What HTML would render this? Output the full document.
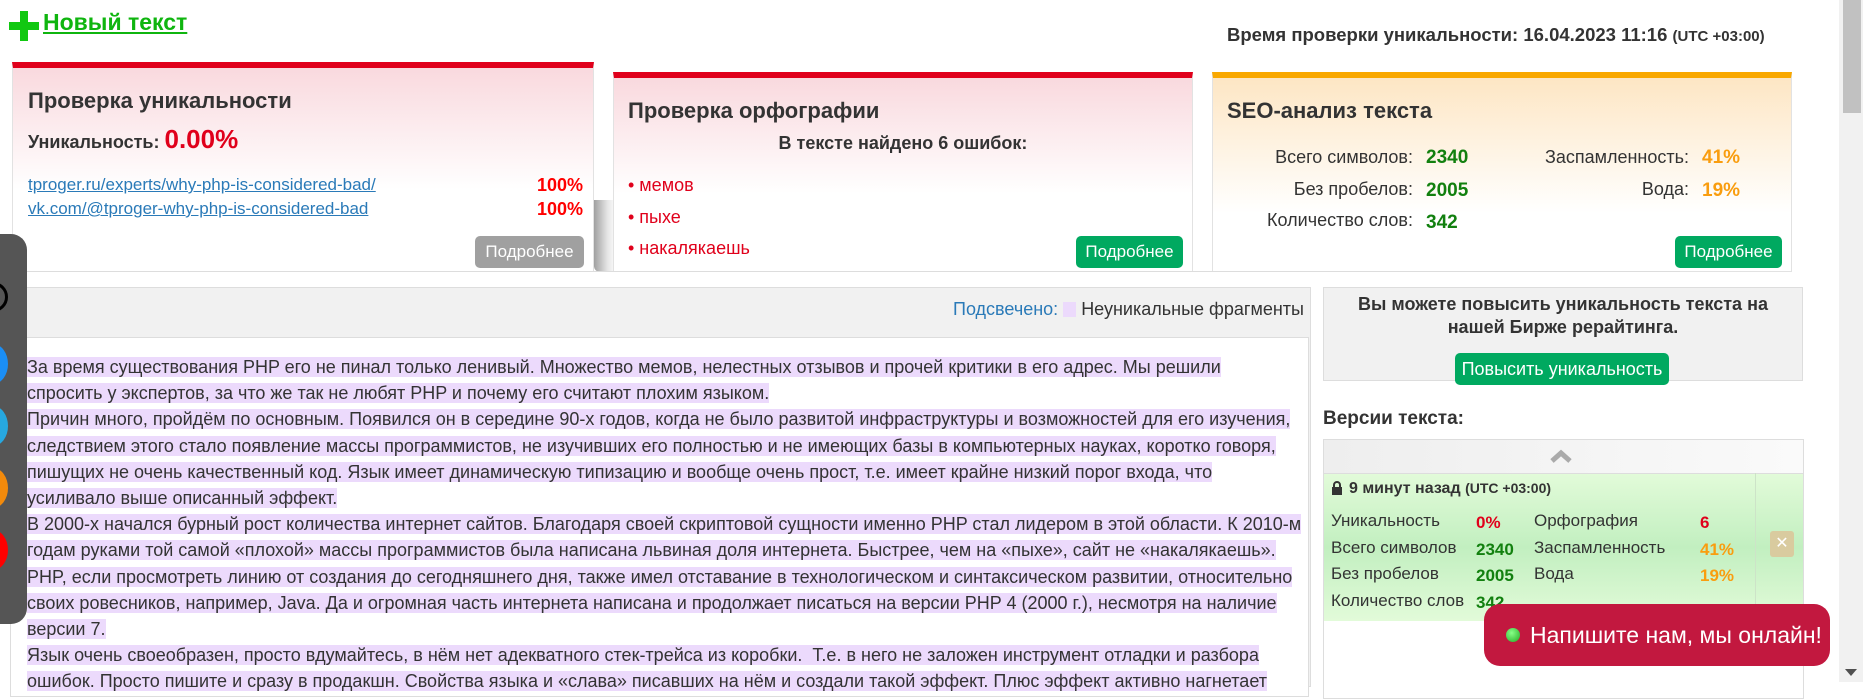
<!DOCTYPE html>
<html><head><meta charset="utf-8"><style>
*{margin:0;padding:0;box-sizing:border-box}
body{width:1863px;height:682px;overflow:hidden;background:#fff;font-family:"Liberation Sans","DejaVu Sans",sans-serif;color:#333;position:relative}
.a{position:absolute}
.card{position:absolute;border:1px solid #e2e2e2;border-top:none}
.btn{position:absolute;border-radius:5px;color:#fff;font-size:17px;text-align:center;line-height:32px}
.g{background:#00a960}
.txt{position:absolute;left:27px;top:354px;font-size:18px;line-height:26.2px;white-space:nowrap;color:#333}
.txt span{background:#ecdafc}
.vg{color:#12800f;font-weight:bold;font-size:19px}
.vo{color:#f99d0f;font-weight:bold;font-size:19px}
</style></head><body>

<svg class="a" style="left:9px;top:11px" width="30" height="30" viewBox="0 0 30 30"><path d="M11 0h8v11h11v8H19v11h-8V19H0v-8h11z" fill="#11c811"/></svg>
<div class="a" style="left:43px;top:9px;font-size:23px;font-weight:bold;color:#0fb50f;text-decoration:underline">Новый текст</div>
<div class="a" style="left:1227px;top:24px;font-size:18.5px;font-weight:bold;color:#333">Время проверки уникальности: 16.04.2023 11:16 <span style="font-size:15px">(UTC +03:00)</span></div>

<div class="card" style="left:12px;top:62px;width:582px;height:210px;background:linear-gradient(#f9d9de,#fff 60%);border-top:6px solid #e0001b">
 <div class="a" style="left:15px;top:20px;font-size:22px;font-weight:bold">Проверка уникальности</div>
 <div class="a" style="left:15px;top:56px;font-size:18px;font-weight:bold">Уникальность: <span style="color:#e0001b;font-size:26px">0.00%</span></div>
 <div class="a" style="left:15px;top:105px;font-size:17px;color:#2a7ab8;text-decoration:underline;line-height:24px">tproger.ru/experts/why-php-is-considered-bad/<br>vk.com/@tproger-why-php-is-considered-bad</div>
 <div class="a" style="right:10px;top:105px;font-size:18px;color:#f00;font-weight:bold;line-height:24px;text-align:right">100%<br>100%</div>
 <div class="btn" style="left:462px;top:168px;width:109px;background:#a0a0a0">Подробнее</div>
</div>

<div class="a" style="left:594px;top:200px;width:22px;height:72px;background:linear-gradient(90deg,#888,#ddd 60%,rgba(255,255,255,0));border-radius:0 0 0 6px;opacity:.8"></div>
<div class="card" style="left:613px;top:72px;width:580px;height:200px;background:linear-gradient(#f9d9de,#fff 60%);border-top:6px solid #e0001b">
 <div class="a" style="left:14px;top:20px;font-size:22px;font-weight:bold">Проверка орфографии</div>
 <div class="a" style="left:0;width:100%;text-align:center;top:55px;font-size:18px;font-weight:bold">В тексте найдено 6 ошибок:</div>
 <div class="a" style="left:14px;top:92px;font-size:18px;color:#e0001b;line-height:31.5px">• мемов<br>• пыхе<br>• накалякаешь</div>
 <div class="btn g" style="left:462px;top:158px;width:107px">Подробнее</div>
</div>

<div class="card" style="left:1212px;top:72px;width:580px;height:200px;background:linear-gradient(#fde6c4,#fff 70%);border-top:6px solid #f9a800">
 <div class="a" style="left:14px;top:20px;font-size:22px;font-weight:bold">SEO-анализ текста</div>
 <div class="a" style="right:378px;top:64px;font-size:18px;text-align:right;line-height:31.5px">Всего символов:<br>Без пробелов:<br>Количество слов:</div>
 <div class="a" style="left:213px;top:64px;line-height:31.5px"><span class="vg">2340</span><br><span class="vg">2005</span><br><span class="vg">342</span></div>
 <div class="a" style="right:102px;top:64px;font-size:18px;text-align:right;line-height:31.5px">Заспамленность:<br>Вода:</div>
 <div class="a" style="left:489px;top:64px;line-height:31.5px"><span class="vo">41%</span><br><span class="vo">19%</span></div>
 <div class="btn g" style="left:462px;top:158px;width:107px">Подробнее</div>
</div>
<div class="a" style="left:0;top:271px;width:1680px;height:1px;background:#ddd"></div>

<div class="a" style="left:10px;top:287px;width:1301px;height:400px;background:#f1f1f1;border:1px solid #ddd"></div>
<div class="a" style="left:953px;top:299px;font-size:18px;color:#2a7ab8">Подсвечено: <span style="display:inline-block;width:13px;height:15px;background:#ecdafc;vertical-align:-2px"></span> <span style="color:#333">Неуникальные фрагменты</span></div>
<div class="a" style="left:10px;top:337px;width:1299px;height:360px;background:#fff;border:1px solid #ddd"></div>
<div class="txt">
<span>За время существования PHP его не пинал только ленивый. Множество мемов, нелестных отзывов и прочей критики в его адрес. Мы решили</span><br>
<span>спросить у экспертов, за что же так не любят PHP и почему его считают плохим языком.</span><br>
<span>Причин много, пройдём по основным. Появился он в середине 90-х годов, когда не было развитой инфраструктуры и возможностей для его изучения,</span><br>
<span>следствием этого стало появление массы программистов, не изучивших его полностью и не имеющих базы в компьютерных науках, коротко говоря,</span><br>
<span>пишущих не очень качественный код. Язык имеет динамическую типизацию и вообще очень прост, т.е. имеет крайне низкий порог входа, что</span><br>
<span>усиливало выше описанный эффект.</span><br>
<span>В 2000-х начался бурный рост количества интернет сайтов. Благодаря своей скриптовой сущности именно PHP стал лидером в этой области. К 2010-м</span><br>
<span>годам руками той самой «плохой» массы программистов была написана львиная доля интернета. Быстрее, чем на «пыхе», сайт не «накалякаешь».</span><br>
<span>PHP, если просмотреть линию от создания до сегодняшнего дня, также имел отставание в технологическом и синтаксическом развитии, относительно</span><br>
<span>своих ровесников, например, Java. Да и огромная часть интернета написана и продолжает писаться на версии PHP 4 (2000 г.), несмотря на наличие</span><br>
<span>версии 7.</span><br>
<span>Язык очень своеобразен, просто вдумайтесь, в нём нет адекватного стек-трейса из коробки.&nbsp; Т.е. в него не заложен инструмент отладки и разбора</span><br>
<span>ошибок. Просто пишите и сразу в продакшн. Свойства языка и «слава» писавших на нём и создали такой эффект. Плюс эффект активно нагнетает</span>
</div>

<div class="a" style="left:1323px;top:287px;width:480px;height:94px;background:#f1f1f1;border:1px solid #ddd"></div>
<div class="a" style="left:1323px;top:293px;width:480px;text-align:center;font-size:18px;font-weight:bold;line-height:23px">Вы можете повысить уникальность текста на<br>нашей Бирже рерайтинга.</div>
<div class="btn g" style="left:1455px;top:353px;width:214px;line-height:32px;font-size:18px">Повысить уникальность</div>
<div class="a" style="left:1323px;top:408px;font-size:19px;font-weight:bold">Версии текста:</div>
<div class="a" style="left:1323px;top:439px;width:481px;height:260px;border:1px solid #ddd;background:#fff"></div>
<div class="a" style="left:1324px;top:440px;width:479px;height:33px;background:linear-gradient(90deg,#eee,#fafafa)"></div>
<svg class="a" style="left:1549px;top:448px" width="24" height="16" viewBox="0 0 24 16"><path d="M3 13L12 5l9 8" stroke="#aaa" stroke-width="5" fill="none"/></svg>
<div class="a" style="left:1324px;top:473px;width:479px;height:148px;background:linear-gradient(#e2fbd9,#c2efc0 50%,#e2fbd9);border-top:1px solid #ddd"></div>
<div class="a" style="left:1755px;top:473px;width:1px;height:148px;background:#cde3c8"></div>
<svg class="a" style="left:1331px;top:481px" width="12" height="14" viewBox="0 0 12 14"><path d="M3 6V4a3 3 0 016 0v2" stroke="#333" stroke-width="2" fill="none"/><rect x="1" y="6" width="10" height="8" fill="#333"/></svg>
<div class="a" style="left:1349px;top:480px;font-size:16px;font-weight:bold">9 минут назад <span style="font-size:14px">(UTC +03:00)</span></div>
<div class="a" style="left:1331px;top:508px;font-size:17px;line-height:26.5px">Уникальность<br>Всего символов<br>Без пробелов<br>Количество слов</div>
<div class="a" style="left:1476px;top:510px;line-height:26.5px;font-size:17px;font-weight:bold"><span style="color:#e0001b">0%</span><br><span style="color:#12800f">2340</span><br><span style="color:#12800f">2005</span><br><span style="color:#12800f">342</span></div>
<div class="a" style="left:1534px;top:508px;font-size:17px;line-height:26.5px">Орфография<br>Заспамленность<br>Вода</div>
<div class="a" style="left:1700px;top:510px;line-height:26.5px;font-size:17px;font-weight:bold"><span style="color:#e0001b">6</span><br><span style="color:#f99d0f">41%</span><br><span style="color:#f99d0f">19%</span></div>
<div class="a" style="left:1770px;top:531px;width:24px;height:26px;background:#d9cb9f;border-radius:3px;color:#fff;font-weight:bold;text-align:center;line-height:26px;font-size:16px">✕</div>

<div class="a" style="left:1484px;top:604px;width:346px;height:62px;background:#c2183f;border-radius:16px;color:#fff;font-size:23px;line-height:62px;padding-left:46px">Напишите нам, мы онлайн!</div>
<div class="a" style="left:1506px;top:628px;width:14px;height:14px;border-radius:50%;background:radial-gradient(circle at 40% 35%,#8f8,#2a2)"></div>

<div class="a" style="left:0;top:234px;width:27px;height:390px;background:#555;border-radius:0 16px 16px 0;overflow:hidden">
 <div class="a" style="left:-22px;top:48px;width:30px;height:30px;border-radius:50%;border:3px solid #000"></div>
 <div class="a" style="left:-22px;top:110px;width:30px;height:40px;border-radius:50%;background:#1b8ef5"></div>
 <div class="a" style="left:-22px;top:172px;width:30px;height:40px;border-radius:50%;background:#27a8e0"></div>
 <div class="a" style="left:-22px;top:234px;width:30px;height:40px;border-radius:50%;background:#f28a0c"></div>
 <div class="a" style="left:-22px;top:296px;width:30px;height:40px;border-radius:50%;background:#f00"></div>
</div>

<div class="a" style="left:1839px;top:0;width:24px;height:682px;background:#f1f1f1"></div>
<div class="a" style="left:1843px;top:0;width:18px;height:113px;background:#c1c1c1"></div>
<svg class="a" style="left:1845px;top:669px" width="12" height="8"><path d="M0 0h12L6 7z" fill="#505050"/></svg>
</body></html>
